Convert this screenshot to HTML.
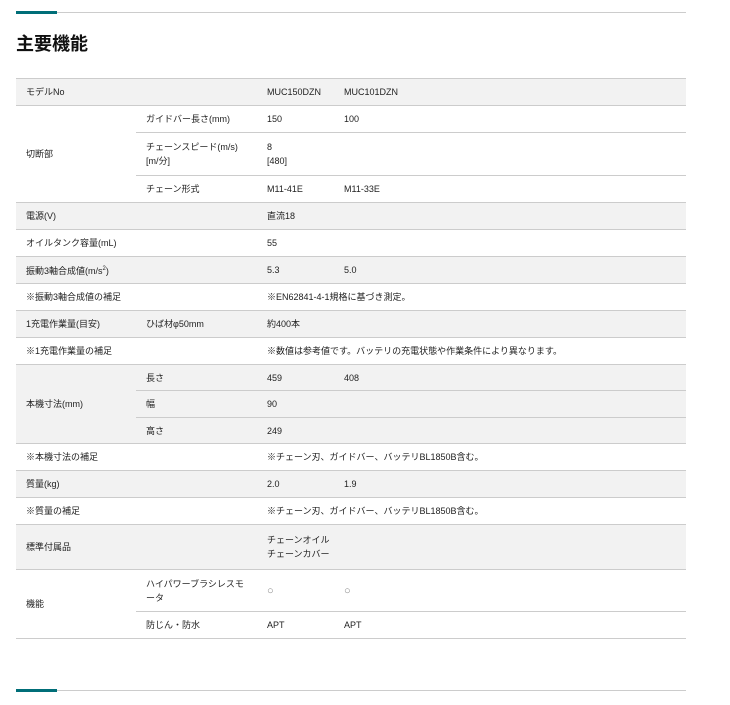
<!DOCTYPE html>
<html><head><meta charset="utf-8"><style>
*{margin:0;padding:0;box-sizing:border-box}
body{width:730px;height:705px;background:#fff;font-family:"Liberation Sans","Noto Sans CJK JP",sans-serif;color:#222;position:relative;overflow:hidden}
.hl{position:absolute;left:16px;width:670px;height:1px;background:#ccc}
.acc{position:absolute;left:16px;width:41px;height:3px;background:#006e78}
h1{position:absolute;left:16px;top:30px;font-size:18px;font-weight:bold;color:#111}
table{position:absolute;left:16px;top:78px;width:670px;border-collapse:collapse;font-size:9px;line-height:14px;table-layout:fixed}
td{border-top:1px solid #ccc;border-bottom:1px solid #ccc;padding:0 0 0 10px;vertical-align:middle}
tr.g td{background:#f2f2f2}
.o{font-size:11px;color:#888}
</style></head><body>
<div class="hl" style="top:12px"></div><div class="acc" style="top:11px"></div>
<h1>主要機能</h1>
<table>
<colgroup><col style="width:120px"><col style="width:121px"><col style="width:77px"><col></colgroup>
<tr class="g" style="height:27px"><td>モデルNo</td><td></td><td>MUC150DZN</td><td>MUC101DZN</td></tr>
<tr style="height:27px"><td rowspan="3">切断部</td><td>ガイドバー長さ(mm)</td><td>150</td><td>100</td></tr>
<tr style="height:43px"><td>チェーンスピード(m/s)<br>[m/分]</td><td>8<br>[480]</td><td></td></tr>
<tr style="height:27px"><td>チェーン形式</td><td>M11-41E</td><td>M11-33E</td></tr>
<tr class="g" style="height:27px"><td>電源(V)</td><td></td><td colspan="2">直流18</td></tr>
<tr style="height:27px"><td>オイルタンク容量(mL)</td><td></td><td colspan="2">55</td></tr>
<tr class="g" style="height:27px"><td>振動3軸合成値(m/s<sup style="font-size:6px">2</sup>)</td><td></td><td>5.3</td><td>5.0</td></tr>
<tr style="height:27px"><td colspan="2">※振動3軸合成値の補足</td><td colspan="2">※EN62841-4-1規格に基づき測定。</td></tr>
<tr class="g" style="height:27px"><td>1充電作業量(目安)</td><td>ひば材φ50mm</td><td colspan="2">約400本</td></tr>
<tr style="height:27px"><td colspan="2">※1充電作業量の補足</td><td colspan="2">※数値は参考値です。バッテリの充電状態や作業条件により異なります。</td></tr>
<tr class="g" style="height:26px"><td rowspan="3">本機寸法(mm)</td><td>長さ</td><td>459</td><td>408</td></tr>
<tr class="g" style="height:27px"><td>幅</td><td colspan="2">90</td></tr>
<tr class="g" style="height:26px"><td>高さ</td><td colspan="2">249</td></tr>
<tr style="height:27px"><td colspan="2">※本機寸法の補足</td><td colspan="2">※チェーン刃、ガイドバー、バッテリBL1850B含む。</td></tr>
<tr class="g" style="height:27px"><td>質量(kg)</td><td></td><td>2.0</td><td>1.9</td></tr>
<tr style="height:27px"><td colspan="2">※質量の補足</td><td colspan="2">※チェーン刃、ガイドバー、バッテリBL1850B含む。</td></tr>
<tr class="g" style="height:45px"><td>標準付属品</td><td></td><td colspan="2">チェーンオイル<br>チェーンカバー</td></tr>
<tr style="height:42px"><td rowspan="2">機能</td><td>ハイパワーブラシレスモ<br>ータ</td><td><span class="o">○</span></td><td><span class="o">○</span></td></tr>
<tr style="height:27px"><td>防じん・防水</td><td>APT</td><td>APT</td></tr>
</table>
<div class="hl" style="top:690px"></div><div class="acc" style="top:689px"></div>
</body></html>
